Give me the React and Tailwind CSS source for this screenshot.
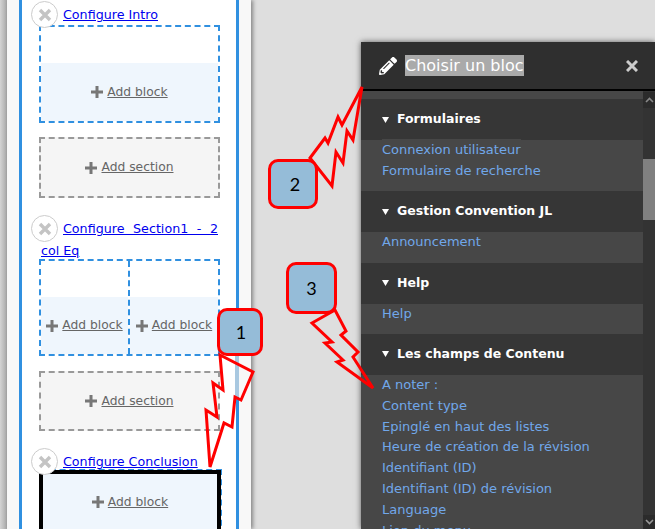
import React from "react";
import { FaPencilAlt } from "react-icons/fa";

const font = { fontFamily: '"DejaVu Sans", sans-serif' };

function Plus() {
  return (
    <svg width="12" height="12" viewBox="0 0 12 12" className="shrink-0">
      <rect x="4.5" y="0" width="3" height="12" fill="#777" />
      <rect x="0" y="4.5" width="12" height="3" fill="#777" />
    </svg>
  );
}

function AddLink({ label }) {
  return (
    <span className="flex items-center gap-[4px] text-[12.3px] text-[#666] whitespace-nowrap">
      <Plus />
      <span className="underline">{label}</span>
    </span>
  );
}

function CloseCircle() {
  return (
    <span className="relative z-10 float-left -mb-[8px] -ml-[10px] -mt-[2px] mr-[5px] flex h-[27px] w-[27px] items-center justify-center rounded-full border border-[#ccc] bg-white">
      <svg width="14" height="14" viewBox="0 0 14 14">
        <path d="M2 2 L12 12 M12 2 L2 12" stroke="#c4c4c4" strokeWidth="3.4" />
      </svg>
    </span>
  );
}

function Heading({ children, className }) {
  return (
    <div className={"px-[2px] text-justify text-[12.7px] leading-[22px] " + className}>
      <CloseCircle />
      <a className="relative top-[1px] text-[#0000ee] underline">{children}</a>
    </div>
  );
}

function AddSection({ className }) {
  return (
    <div className={"flex items-center justify-center border-2 border-dashed border-[#999] bg-[#f5f5f5] " + className}>
      <AddLink label="Add section" />
    </div>
  );
}

function Blocks({ columns, className }) {
  return (
    <div className={"flex border-2 border-dashed border-[#3090e0] " + className}>
      {Array.from({ length: columns }).map((_, i) => (
        <div
          key={i}
          className={
            "flex flex-col " +
            (i > 0 ? "flex-1 border-l-2 border-dashed border-[#3090e0]" : columns > 1 ? "w-[87px]" : "flex-1")
          }
        >
          <div className="h-[36px]" />
          <div className="flex flex-1 items-center justify-center bg-[#eff6fd]">
            <AddLink label="Add block" />
          </div>
        </div>
      ))}
    </div>
  );
}

function Group({ title, items, first }) {
  return (
    <section>
      <h3 className="flex h-[41px] items-center gap-[8px] bg-[#363636] pl-[21px] text-[12.5px] font-bold text-white">
        <svg width="7" height="6" viewBox="0 0 7 6"><path d="M0 0 H7 L3.5 6 Z" fill="#fff" /></svg>
        {title}
      </h3>
      <ul className="bg-[#474747] pb-[9.6px] pl-[21px] text-[13px] text-[#71a7ea]">
        {items.map((it, i) => (
          <li key={it} className="h-[20.8px] leading-[20.8px]">
            <span className={first && i === 0 ? "inline-block shadow-[0_-1px_0_#474747]" : ""}>{it}</span>
          </li>
        ))}
      </ul>
    </section>
  );
}

function Callout({ className, n }) {
  return (
    <div
      className={"absolute flex items-center justify-center rounded-[10px] border-[3px] border-[#ff0000] bg-[#95bcd8] text-[18px] text-black " + className}
      style={{ fontFamily: "Lato, sans-serif" }}
    >
      {n}
    </div>
  );
}

export default function App() {
  return (
    <div className="relative flex h-[529px] w-[655px] overflow-hidden bg-[#dedede]" style={font}>
      {/* Layout builder sidebar */}
      <div className="w-[7px] shrink-0 bg-gradient-to-r from-[#d4d4d4] to-[#a8a8a8]" />
      <div className="w-[244px] shrink-0 bg-[#f8f8f8] px-[12px] shadow-[2px_0_4px_rgba(0,0,0,0.4)]">
        <div className="h-full border-x-[3px] border-[#3090e0] bg-white pl-[17px] pr-[16px] pt-[3px]">
          <Heading className="h-[22px]">Configure Intro</Heading>
          <Blocks columns={1} className="h-[98px]" />
          <AddSection className="mt-[14px] h-[61px]" />

          <Heading className="mt-[19px] -mb-[2px] h-[44px]">Configure Section1 - 2 col Eq</Heading>
          <Blocks columns={2} className="h-[97px]" />
          <AddSection className="mt-[15px] h-[60px]" />

          <Heading className="mt-[19px] -mb-[3px] h-[22px]">Configure Conclusion</Heading>
          <div className="-mr-[2px] ml-[1px] border-2 border-dashed border-[#3090e0]">
            <div className="-ml-[3px] -mr-[1px] -mt-[1px] flex h-[64px] items-start justify-center border-4 border-black bg-[#eff6fd] pt-[19px]">
              <AddLink label="Add block" />
            </div>
          </div>
        </div>
      </div>

      {/* Block chooser */}
      <div className="ml-[110px] mt-[42px] flex w-[294px] shrink-0 flex-col shadow-[0_0_6px_rgba(0,0,0,0.6)]">
        <header className="flex h-[49px] shrink-0 items-center border-b-2 border-black bg-[#2f2f2f] pl-[18px] pr-[17px]">
          <FaPencilAlt className="h-[18px] w-[18px] text-white" />
          <span className="ml-[8px] bg-[#aaaaaa] text-[16px] leading-[21px] text-white">Choisir un bloc</span>
          <svg width="12" height="12" viewBox="0 0 12 12" className="ml-auto">
            <path d="M1 1 L11 11 M11 1 L1 11" stroke="#ccc" strokeWidth="3" />
          </svg>
        </header>
        <div className="flex min-h-0 flex-1">
          <div className="min-w-0 flex-1 overflow-hidden bg-[#474747] pt-[8px]">
            <Group
              first
              title="Formulaires"
              items={["Connexion utilisateur", "Formulaire de recherche"]}
            />
            <Group title="Gestion Convention JL" items={["Announcement"]} />
            <Group title="Help" items={["Help"]} />
            <Group
              title="Les champs de Contenu"
              items={[
                "A noter :",
                "Content type",
                "Epinglé en haut des listes",
                "Heure de création de la révision",
                "Identifiant (ID)",
                "Identifiant (ID) de révision",
                "Language",
                "Lien du menu",
              ]}
            />
          </div>
          <div className="flex w-[12px] shrink-0 flex-col bg-[#333] pt-[1px]">
            <div className="flex h-[16px] items-center justify-center bg-[#2b2b2b]">
              <svg width="9" height="6" viewBox="0 0 9 6"><path d="M1 5 L4.5 1.5 L8 5" fill="none" stroke="#888" strokeWidth="1.6" /></svg>
            </div>
            <div className="mt-[51px] h-[61px] bg-[#808080]" />
            <div className="mt-auto flex h-[14px] items-center justify-center bg-[#2b2b2b]">
              <svg width="9" height="6" viewBox="0 0 9 6"><path d="M1 1 L4.5 4.5 L8 1" fill="none" stroke="#999" strokeWidth="1.6" /></svg>
            </div>
          </div>
        </div>
      </div>

      {/* Annotations drawn over the screenshot */}
      <div className="absolute left-[235px] top-[355px] h-[42px] w-[4px] bg-[#a9c8e0]" />
      <svg width="655" height="529" className="pointer-events-none absolute left-0 top-0">
        <g fill="none" stroke="#ff0000" strokeWidth="3" strokeLinejoin="miter">
          <path d="M220 355 L253 372 L241 400 L235 397 L232 427 L224 423 L210 467 L206 410 L217 417 L213 383 L223 390 Z" />
          <path d="M310 158 L325 138 L328 143 L338 117 L342 125 L362 87 L353 140 L347 131 L343 163 L336 152 L332 186 Z" />
          <path d="M335 310 L312 323 L332 342 L325 343 L343 360 L337 362 L373 388 L353 357 L358 352 L341 335 L346 331 Z" />
        </g>
      </svg>
      <Callout n="1" className="left-[217px] top-[308px] h-[48px] w-[46px] pl-[2px]" />
      <Callout n="2" className="left-[268px] top-[159px] h-[50px] w-[50px] pl-[4px]" />
      <Callout n="3" className="left-[286px] top-[262px] h-[52px] w-[51px]" />
    </div>
  );
}
